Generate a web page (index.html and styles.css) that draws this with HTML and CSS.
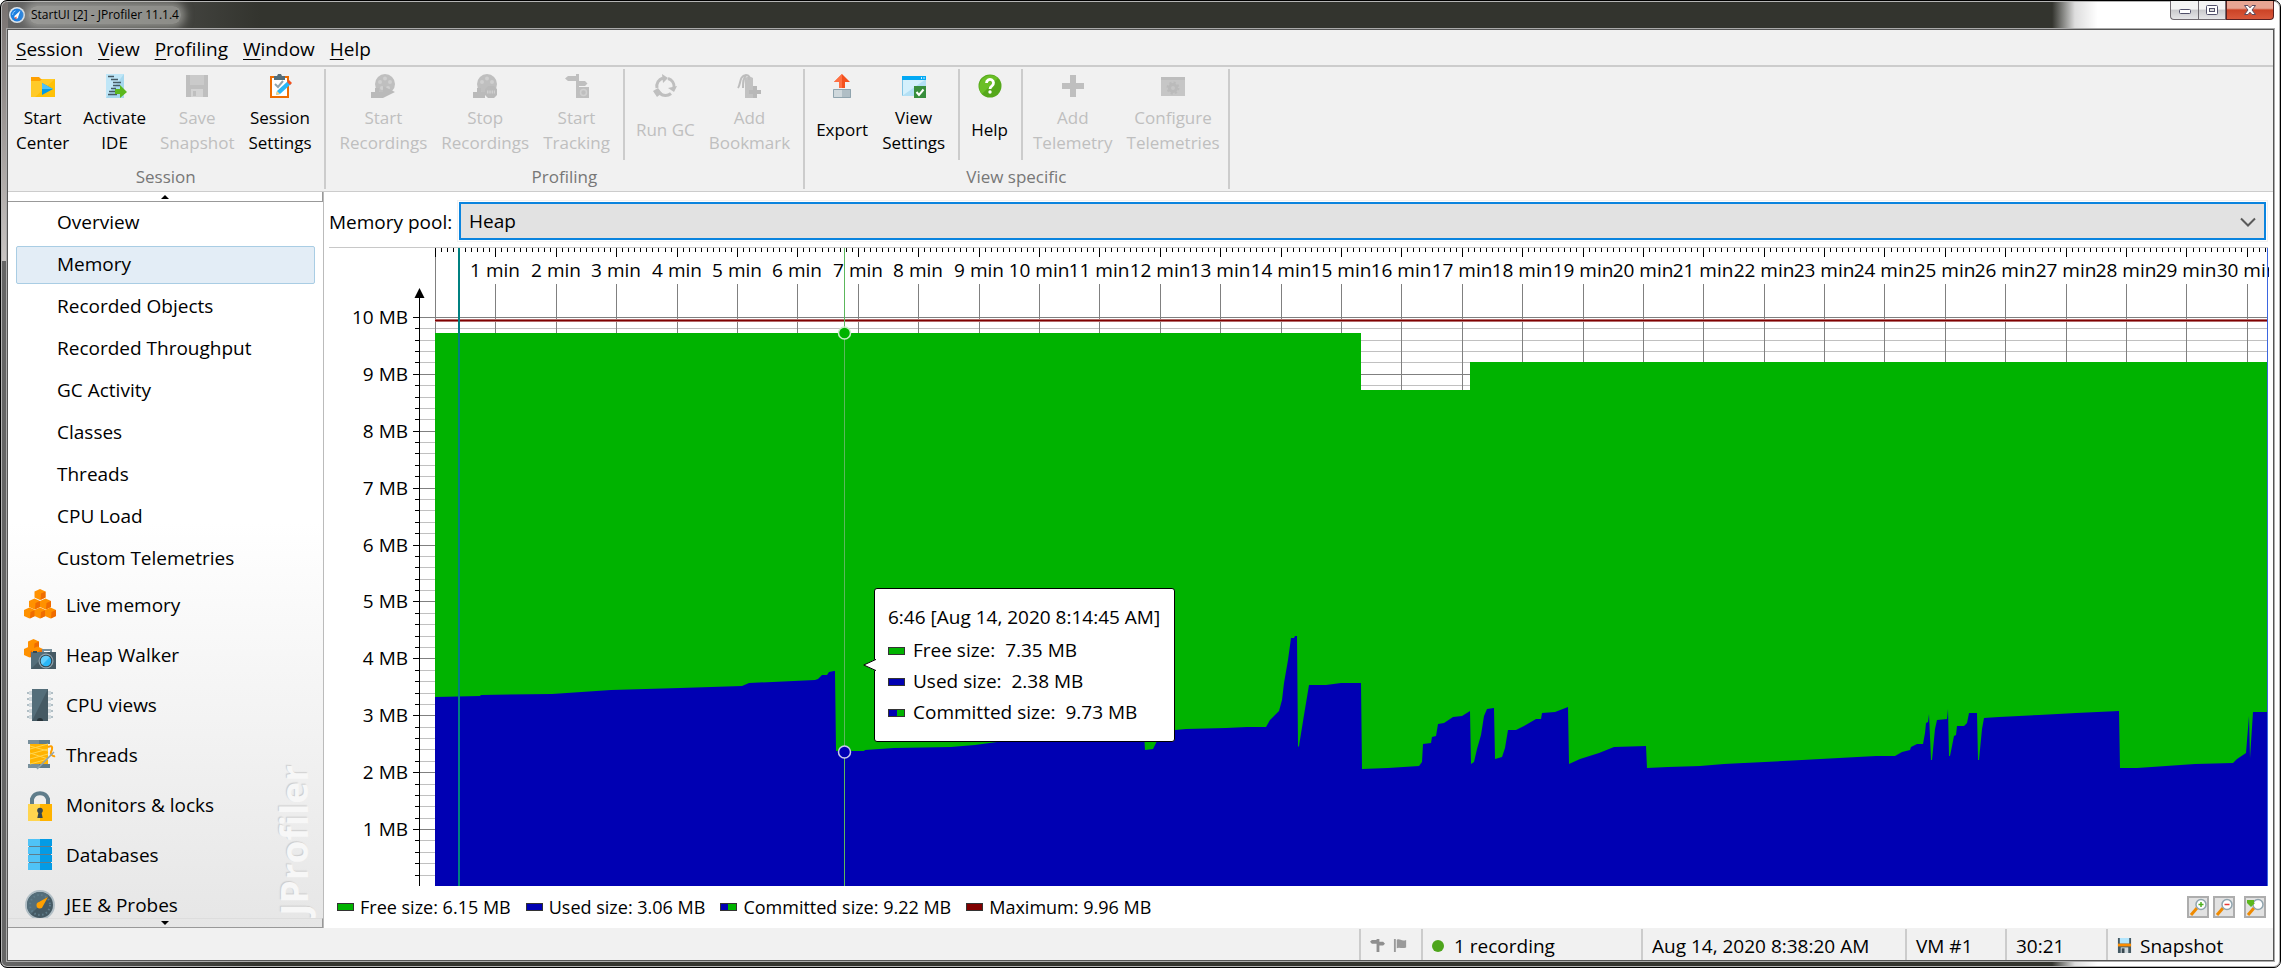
FILE: index.html
```html
<!DOCTYPE html>
<html lang="en">
<head>
<meta charset="utf-8">
<title>StartUI [2] - JProfiler 11.1.4</title>
<link rel="stylesheet" href="styles.css">
</head>
<body>
<div class="frame">
  <header class="titlebar">
    <svg class="app-icon" viewBox="0 0 16 16"><circle cx="8" cy="8" r="8" fill="#dfe6ec"/><circle cx="8" cy="8" r="6.5" fill="#1e7fe0"/><path d="M11.5 3.500 9.300 9.500a2 2 0 1 1-2.700-1.600z" fill="#fff"/><path d="M3.500 8a4.500 4.500 0 0 1 3-4.200" fill="none" stroke="#8cc8ff"/><path d="M5.500 11l2-1.500v3z" fill="#e8452c"/></svg>
    <h1 class="title">StartUI [2] - JProfiler 11.1.4</h1>
    <div class="window-buttons">
      <button class="wb wb-min" aria-label="Minimize"><svg viewBox="0 0 14 12"><rect x="1.500" y="5.500" width="11" height="4" rx="1" fill="#fff" stroke="#51506a"/></svg></button>
      <button class="wb wb-max" aria-label="Maximize"><svg viewBox="0 0 14 12"><rect x="1.500" y="1.500" width="11" height="9" rx="1" fill="#fff" stroke="#51506a"/><rect x="4.500" y="4.500" width="5" height="3" fill="#ddd" stroke="#51506a"/></svg></button>
      <button class="wb wb-close" aria-label="Close"><svg viewBox="0 0 14 12"><path d="M1.500 1.500h3.500l2 2.300 2-2.300h3.500L9 6l3.500 4.500H9L7 8.200l-2 2.300H1.500L5 6z" fill="#fff" stroke="#5c4a5e"/></svg></button>
    </div>
  </header>

  <div class="client">
    <nav class="menubar" aria-label="Main menu">
      <button><u>S</u>ession</button><button><u>V</u>iew</button><button><u>P</u>rofiling</button><button><u>W</u>indow</button><button><u>H</u>elp</button>
    </nav>

    <div class="toolbar">
      <section class="group">
        <div class="tools">
          <div class="cluster lead">
            <button class="tool"><svg viewBox="0 0 24 24"><path d="M0 3h8l2 2h14v18H0z" fill="#ffa000"/><path d="M0 7h9l2-2h13v18H0z" fill="#ffca28"/><path d="M24 5v18H4z" fill="#ffc107"/><path d="M11 9v12l11-6z" fill="#039be5"/><path d="M11 9v6h11z" fill="#4fc3f7"/></svg><span class="label">Start<br>Center</span></button>
            <button class="tool"><svg viewBox="0 0 24 24"><path d="M3 0h18v24H3z" fill="#bfe6f7"/><path d="M3 24 21 0v24z" fill="#a6d8ee"/><path d="M5 2.500h6M8 5.500h7M10 8.500h8M10 11.500h7M8 14.500h5M6 17.500h6M5 20.500h9" stroke="#455a64" stroke-width="1.500"/><path d="M12 15h5v-4l7 7-7 6v-4h-5z" fill="#5cb81e"/></svg><span class="label">Activate<br>IDE</span></button>
            <button class="tool" disabled><svg viewBox="0 0 24 24" fill="#bfbfbf"><path d="M1 1h22v22H1z"/><path d="M5 1h14v10H5z" fill="#cacaca"/><path d="M6 15h12v8H6z" fill="#d3d3d3"/><path d="M8 17h3v5H8z"/></svg><span class="label">Save<br>Snapshot</span></button>
            <button class="tool"><svg viewBox="0 0 24 24"><rect x="3" y="3" width="17" height="20" fill="#fff" stroke="#ef6c00" stroke-width="2"/><path d="M6 2h3l1-2h3l1 2h3v4H6z" fill="#546e7a"/><path d="m7 10 3 3 5-6" fill="none" stroke="#90a4ae" stroke-width="2"/><path d="m20 7 3 3-11 10-4 1 1-4z" fill="#29b6f6"/><path d="m19 8 2-2 3 3-2 2z" fill="#f4511e"/><path d="m9 17 3 3-4 1z" fill="#ffd180"/></svg><span class="label">Session<br>Settings</span></button>
          </div>
        </div>
        <div class="group-name">Session</div>
      </section>

      <section class="group">
        <div class="tools">
          <div class="cluster wide">
            <button class="tool" disabled><svg viewBox="0 0 24 24"><circle cx="14" cy="10" r="10" fill="#bfbfbf"/><g fill="#cfcfcf"><circle cx="14" cy="4.500" r="2"/><circle cx="19" cy="8" r="2"/><circle cx="9" cy="8" r="2"/><circle cx="17" cy="14" r="2"/><circle cx="11" cy="14" r="2"/></g><path d="M0 18h4v-4h4v4h4v6H0zM12 12l12 6-12 6z" fill="#bababa"/></svg><span class="label">Start<br>Recordings</span></button>
            <button class="tool" disabled><svg viewBox="0 0 24 24"><circle cx="14" cy="10" r="10" fill="#bfbfbf"/><g fill="#cfcfcf"><circle cx="14" cy="4.500" r="2"/><circle cx="19" cy="8" r="2"/><circle cx="9" cy="8" r="2"/></g><path d="M0 18h4v-4h4v4h4v6H0zM15 12h6l3 3v6l-3 3h-6l-3-3v-6z" fill="#bababa"/><path d="M14 18h8" stroke="#cfcfcf" stroke-width="3" stroke-dasharray="1.500 .8"/></svg><span class="label">Stop<br>Recordings</span></button>
            <button class="tool" disabled><svg viewBox="0 0 24 24" fill="#bfbfbf"><path d="M0 4.500 3 2h8V0h3v7h6l2.500 2.500L20 12h-6v1h10v11H11V7H3z"/><circle cx="18.500" cy="18.500" r="3" fill="none" stroke="#d0d0d0" stroke-width="1.500"/></svg><span class="label">Start<br>Tracking</span></button>
          </div>
          <div class="cluster">
            <button class="tool" disabled><svg viewBox="0 0 24 24" fill="none" stroke="#bfbfbf" stroke-width="3"><path d="M4 14A8.500 8.500 0 0 1 10 4M15 4.500a8.500 8.500 0 0 1 6 9M18 19.500a8.500 8.500 0 0 1-11 0"/><path d="m9 0 6 4-5 5zM24 12l-3 6-6-4zM0 17l5-3 4 5-5 4z" fill="#bfbfbf" stroke="none"/></svg><span class="label">Run GC</span></button>
            <button class="tool" disabled><svg viewBox="0 0 24 24"><path d="M8 4l4-2 4 2v20H8z" fill="#c2c2c2"/><path d="M1 14C4 10 2 2 9 1c4 0 3 3 3 5M6 14c0-6 0-10 3-12" fill="none" stroke="#bdbdbd" stroke-width="2"/><path d="M16 12h4v4h4v4h-4v4h-4v-4h-4v-4h4z" fill="#b8b8b8"/></svg><span class="label">Add<br>Bookmark</span></button>
          </div>
        </div>
        <div class="group-name">Profiling</div>
      </section>

      <section class="group">
        <div class="tools">
          <div class="cluster">
            <button class="tool"><svg viewBox="0 0 24 24"><path d="M3 15h18v9H3z" fill="#b0bec5"/><path d="M3 15h9v9H3z" fill="#cfd8dc"/><path d="M3.500 15.500h17v8h-17z" fill="none" stroke="#90a4ae"/><path d="M9 14V8H4l8-8 8 8h-5v6z" fill="#f4511e"/><path d="M9 14V8H4l8-8v14z" fill="#ff7043"/></svg><span class="label">Export</span></button>
            <button class="tool"><svg viewBox="0 0 24 24"><path d="M.5 3.500h23v18H.5z" fill="#d4f0fc" stroke="#81c4e4"/><path d="M0 22 24 5v17z" fill="#b3e0f5"/><path d="M0 2h24v4H0z" fill="#03a9f4"/><path d="M19 4h1M21.500 4h1" stroke="#fff" stroke-width="1.500"/><path d="M12 12h12v12H12z" fill="#388e3c"/><path d="m14.500 18 2.500 3 4.500-5.500" fill="none" stroke="#fff" stroke-width="2"/></svg><span class="label">View<br>Settings</span></button>
          </div>
          <div class="cluster">
            <button class="tool"><svg viewBox="0 0 24 24"><circle cx="12" cy="12" r="11.500" fill="#55a81b"/><path d="M3.900 20.100A11.500 11.500 0 0 1 20.100 3.900z" fill="#6abf26"/><path d="M8.500 9a3.500 3.500 0 1 1 5.500 2.800c-1.500 1-2 1.700-2 3.200" fill="none" stroke="#fff" stroke-width="2.800"/><circle cx="12" cy="18" r="1.700" fill="#fff"/></svg><span class="label">Help</span></button>
          </div>
          <div class="cluster tail">
            <button class="tool" disabled><svg viewBox="0 0 24 24"><path d="M9 1h6v8h8v6h-8v8H9v-8H1V9h8z" fill="#bfbfbf"/></svg><span class="label">Add<br>Telemetry</span></button>
            <button class="tool" disabled><svg viewBox="0 0 24 24"><path d="M0 3h24v19H0z" fill="#c6c6c6"/><path d="M0 3h24v3H0z" fill="#bdbdbd"/><circle cx="12" cy="14" r="3.500" fill="none" stroke="#bbb" stroke-width="3"/><circle cx="12" cy="14" r="5.500" fill="none" stroke="#bbb" stroke-width="2" stroke-dasharray="2.200 2.100"/></svg><span class="label">Configure<br>Telemetries</span></button>
          </div>
        </div>
        <div class="group-name">View specific</div>
      </section>
    </div>

    <div class="body">
      <aside class="sidebar">
        <button class="scroll scroll-up" aria-label="Scroll up"><svg viewBox="0 0 8 4"><path d="M4 0l4 4H0z"/></svg></button>
        <nav class="views" aria-label="Views">
          <div class="subs">
            <a class="sub" href="#overview">Overview</a>
            <a class="sub selected" href="#memory">Memory</a>
            <a class="sub" href="#objects">Recorded Objects</a>
            <a class="sub" href="#throughput">Recorded Throughput</a>
            <a class="sub" href="#gc">GC Activity</a>
            <a class="sub" href="#classes">Classes</a>
            <a class="sub" href="#threads">Threads</a>
            <a class="sub" href="#cpu">CPU Load</a>
            <a class="sub" href="#custom">Custom Telemetries</a>
          </div>
          <a class="cat" href="#live"><svg viewBox="0 0 32 32"><defs><g id="cube"><path d="M0 2.500 5.500 0 11 2.500v6L5.500 11 0 8.500z" fill="#ff9100"/><path d="M6.500 4.500 11 2.500v6l-5 2.500z" fill="#ef6c00"/></g></defs><use href="#cube" x="10.500" y="0"/><use href="#cube" x="5" y="9.500"/><use href="#cube" x="16" y="9.500"/><use href="#cube" x="0" y="18.500"/><use href="#cube" x="10.500" y="18.500"/><use href="#cube" x="21" y="18.500"/></svg>Live memory</a>
          <a class="cat" href="#heap"><svg viewBox="0 0 32 32"><use href="#cube" x="4" y="0"/><use href="#cube" x="0" y="7.500"/><use href="#cube" x="8" y="7.500"/><path d="M19 14v-3h8v3" fill="none" stroke="#78909c" stroke-width="2"/><path d="M7 13h25v17H7z" fill="#546e7a"/><path d="M7 30 24 13h8v17z" fill="#455a64"/><path d="M9 12h4v2H9z" fill="#37474f"/><circle cx="22" cy="22" r="7.500" fill="#90a4ae"/><circle cx="22" cy="22" r="6.300" fill="#37474f"/><circle cx="22" cy="22" r="5.200" fill="#29b6f6"/><path d="M18.300 25.700a5.200 5.200 0 0 1 7.400-7.400z" fill="#64cdfb"/></svg>Heap Walker</a>
          <a class="cat" href="#cpuviews"><svg viewBox="0 0 32 32"><path d="M3 4h26M3 10h26M3 16h26M3 22h26M3 28h26" stroke="#b0bec5" stroke-width="2"/><path d="M5 4h22M5 10h22M5 16h22M5 22h22M5 28h22" stroke="#cfd8dc" stroke-width="4"/><path d="M8 0h16v32H8z" fill="#546e7a"/><path d="M24 0v32H8z" fill="#455a64"/><path d="M13 32a3 3 0 0 1 6 0z" fill="#263238"/></svg>CPU views</a>
          <a class="cat" href="#threadviews"><svg viewBox="0 0 32 32"><path d="M4 1h22v4H4zM4 25h22v4H4z" fill="#607d8b"/><path d="M4 1h11v4H4zM4 25h11v4H4z" fill="#78909c"/><path d="M6 5h18v20H6z" fill="#ffb300"/><path d="m6 10 18-5M6 15l18-5M6 20l18-5M6 25l18-5M6 7l18 5M6 14l18 6" stroke="#ffd54f"/><path d="M24 8c6-3 4 3 3 5s2 5 4 4" fill="none" stroke="#ffa000" stroke-width="2"/><path d="M30 13 13 30" stroke="#90a4ae" stroke-width="1.500"/></svg>Threads</a>
          <a class="cat" href="#monitors"><svg viewBox="0 0 32 32"><path d="M8 16V10a8.500 8.500 0 0 1 16 0v6" fill="none" stroke="#607d8b" stroke-width="4"/><path d="M4 15h24v17H4z" fill="#ffb300"/><path d="M4 15h12v17H4z" fill="#ffd54f"/><circle cx="16" cy="21.500" r="2.800" fill="#37474f"/><path d="m14.800 22-1.500 7h5.400l-1.500-7z" fill="#37474f"/></svg>Monitors &amp; locks</a>
          <a class="cat" href="#databases"><svg viewBox="0 0 32 32"><path d="M5 7h22M5 15h22M5 23h22" stroke="#607d8b" stroke-width="3"/><path d="M4 0h24v7H4zM4 8h24v7H4zM4 16h24v7H4zM4 24h24v7H4z" fill="#039be5"/><path d="M4 0h12v7H4zM4 8h12v7H4zM4 16h12v7H4zM4 24h12v7H4z" fill="#4fc3f7"/></svg>Databases</a>
          <a class="cat" href="#probes"><svg viewBox="0 0 32 32"><circle cx="16" cy="16" r="15" fill="#b0bec5"/><circle cx="16" cy="16" r="13" fill="#455a64"/><path d="M6.800 25.200A13 13 0 0 1 25.200 6.800z" fill="#546e7a"/><circle cx="16" cy="16" r="10" fill="none" stroke="#607d8b" stroke-width="2" stroke-dasharray="1.500 2.500"/><path d="m24 8-5 9a3.300 3.300 0 1 1-4-4z" fill="#ffa000"/></svg>JEE &amp; Probes</a>
          <div class="watermark" aria-hidden="true">JProfiler</div>
        </nav>
        <button class="scroll scroll-down" aria-label="Scroll down"><svg viewBox="0 0 8 4"><path d="M0 0h8L4 4z"/></svg></button>
      </aside>

      <main class="main">
        <div class="pool">
          <label for="pool">Memory pool:</label>
          <div class="select-wrap">
            <select id="pool"><option>Heap</option><option>Non-heap</option></select>
            <svg viewBox="0 0 16 10"><path d="M1 1.500 8 8.500 15 1.500" fill="none" stroke="#5a5a5a" stroke-width="2"/></svg>
          </div>
        </div>
        <div class="chart">
          <svg id="plot" role="img" aria-label="Heap size over time"></svg>
          <div class="tooltip" id="tooltip">
            <svg class="tip" viewBox="0 0 13 12"><path d="M13 0 .8 6 13 12z" fill="#fff"/><path d="M13 .4.800 6 13 11.600" fill="none" stroke="#000"/></svg>
            <div class="tip-title">6:46 [Aug 14, 2020 8:14:45 AM]</div>
            <div class="tip-row"><i class="swatch free"></i>Free size:&nbsp; 7.35 MB</div>
            <div class="tip-row"><i class="swatch used"></i>Used size:&nbsp; 2.38 MB</div>
            <div class="tip-row"><i class="swatch both"></i>Committed size:&nbsp; 9.73 MB</div>
          </div>
        </div>
        <div class="legend">
          <span class="entry"><i class="swatch free"></i>Free size: 6.15 MB</span>
          <span class="entry"><i class="swatch used"></i>Used size: 3.06 MB</span>
          <span class="entry"><i class="swatch both"></i>Committed size: 9.22 MB</span>
          <span class="entry"><i class="swatch max"></i>Maximum: 9.96 MB</span>
          <div class="zoom-buttons">
            <button aria-label="Zoom in"><svg viewBox="0 0 18 18"><path d="m8 10-6 7" stroke="#ef8a00" stroke-width="3"/><circle cx="12" cy="6.500" r="5" fill="#fff" stroke="#90a4ae" stroke-width="1.500"/><path d="M9.500 6.500h5M12 4v5" stroke="#4caf20" stroke-width="1.500"/></svg></button>
            <button aria-label="Zoom out"><svg viewBox="0 0 18 18"><path d="m8 10-6 7" stroke="#ef8a00" stroke-width="3"/><circle cx="12" cy="6.500" r="5" fill="#fff" stroke="#90a4ae" stroke-width="1.500"/><path d="M9.500 6.500h5" stroke="#e53935" stroke-width="1.500"/></svg></button>
            <button class="fit" aria-label="Fit window"><svg viewBox="0 0 18 18"><path d="m8 10-6 7" stroke="#ef8a00" stroke-width="3"/><circle cx="12" cy="6.500" r="5" fill="#fff" stroke="#90a4ae" stroke-width="1.500"/><path d="M1 2h7v3h1l-4 4-4-4z" fill="#5cb81e"/></svg></button>
          </div>
        </div>
      </main>
    </div>

    <footer class="status">
      <div class="cell icons"><svg viewBox="0 0 16 16"><path d="M0 4l2-2h5V1h3v3h4l2 2-2 2h-4v7H7V6H2z" fill="#8f8f8f"/></svg><svg viewBox="0 0 16 16"><path d="M1 1h2v14H1zM4 2c3-2 5 2 10 0v8c-5 2-7-1-10 1z" fill="#9a9a9a"/></svg></div>
      <div class="cell rec"><i class="dot"></i>1 recording</div>
      <div class="cell date">Aug 14, 2020 8:38:20 AM</div>
      <div class="cell vm">VM #1</div>
      <div class="cell time">30:21</div>
      <div class="cell snap"><svg viewBox="0 0 16 16"><path d="M1 0h14v16H1z" fill="#455a64"/><path d="M3 0h10v6H3z" fill="#b3e5fc"/><path d="M1 6h14v3H1z" fill="#fb8c00"/><path d="M4 10h8v6H4z" fill="#cfd8dc"/><path d="M5 11h3v5H5z" fill="#37474f"/></svg>Snapshot</div>
    </footer>
  </div>
</div>
<script src="chart.js"></script>
</body>
</html>
```

FILE: styles.css
```css
* { box-sizing: border-box; }

body {
  margin: 0;
  background: #fff;
  color: #000;
  font: 19px/24px "Open Sans", "Noto Sans", sans-serif;
}

button { font: inherit; color: inherit; background: none; border: 0; padding: 0; }
svg { display: block; }

/* window frame */
.frame {
  display: flex;
  flex-direction: column;
  height: 100vh;
  padding: 0 6px 6px;
  border: 1px solid #000;
  border-radius: 7px;
  background:
    linear-gradient(#77716f, #c8c4c2) left top / 7px 260px no-repeat,
    linear-gradient(90deg, #666 0, #33342e 260px, #33342e 90%, #ddd 91%, #fff 92%);
  box-shadow: inset 0 0 0 1px #b5b5b5;
}

.titlebar { flex: 0 0 28px; display: flex; align-items: center; gap: 4px; padding-left: 2px; }
.app-icon { width: 16px; height: 16px; }
.title {
  margin: 0;
  padding: 0 2px;
  font-size: 12px;
  line-height: 18px;
  font-weight: 400;
  background: rgba(190, 190, 185, .6);
  border-radius: 8px;
  box-shadow: 0 0 8px 4px rgba(190, 190, 185, .6);
}
.window-buttons { margin-left: auto; align-self: flex-start; display: flex; }
.wb { display: grid; place-items: center; width: 28px; height: 19px; border: 1px solid #6f6a70; border-top: 0; background: linear-gradient(#f4f4f4 45%, #c9c9cc 50%, #e6e6e8); }
.wb svg { width: 14px; height: 12px; }
.wb-min { border-radius: 0 0 0 4px; border-right: 0; }
.wb-close { width: 48px; border-color: #5b2020; border-radius: 0 0 4px 0; background: linear-gradient(#e8a593 40%, #cc4326 50%, #d9593c); }

.client { flex: 1; min-height: 0; display: flex; flex-direction: column; border: 1px solid #555; background: #f1f1f1; box-shadow: 0 0 0 1px #aaa; }

/* menu */
.menubar { flex: 0 0 37px; display: flex; align-items: center; gap: 15px; padding: 2px 8px 0; border-bottom: 2px solid #ccc; }
.menubar u { text-underline-offset: 3px; }

/* toolbar */
.toolbar { flex: 0 0 124px; display: flex; padding: 2px 0; border-bottom: 1px solid #ccc; font-size: 17px; line-height: 25px; }
.group { display: flex; flex-direction: column; border-right: 2px solid #ccc; }
.tools { display: flex; }
.cluster { display: flex; height: 91px; padding: 5px 6px 0 4px; }
.cluster.lead { padding-left: 1px; padding-right: 5px; }
.cluster.wide { padding-left: 7px; }
.cluster.tail { padding-left: 3px; padding-right: 1px; }
.cluster + .cluster { border-left: 2px solid #ccc; }
.tool { display: flex; flex-direction: column; align-items: center; padding: 0 7px; }
.tool svg { width: 24px; height: 24px; }
.tool .label { flex: 1; display: flex; align-items: center; text-align: center; margin: 6px 0 5px; white-space: nowrap; }
.tool:disabled { color: #bfbfbf; }
.group-name { text-align: center; color: #777; padding-top: 4px; }

/* body */
.body { flex: 1; min-height: 0; display: flex; background: #fff; }
.sidebar { flex: 0 0 316px; display: flex; flex-direction: column; border-right: 1px solid #bbb; background: linear-gradient(#fff 45%, #e6e6e6); }
.scroll { flex: 0 0 10px; display: grid; place-items: center; border-right: 1px solid #999; border-bottom: 1px solid #999; }
.scroll svg { width: 8px; height: 4px; }
.scroll-down { border-top: 1px solid #ddd; }
.views { position: relative; flex: 1; min-height: 0; overflow: hidden; }
.views a { display: flex; align-items: center; color: #000; text-decoration: none; }
.subs { display: grid; gap: 4px; padding: 2px 8px; }
.sub { height: 38px; padding: 0 0 2px 40px; border: 1px solid transparent; border-radius: 2px; }
.sub.selected { background: #e3edf6; border-color: #a9cde4; }
.cat { height: 50px; gap: 10px; padding-left: 16px; }
.cat svg { flex: none; width: 32px; height: 32px; }
.watermark { position: absolute; right: 8px; bottom: 2px; writing-mode: vertical-rl; transform: rotate(180deg); font-size: 37px; line-height: 42px; font-weight: 700; color: #f7f7f7; text-shadow: 1px -1px 1px #ccc; }

.main { flex: 1; min-width: 0; display: flex; flex-direction: column; padding: 8px 4px 0 5px; }
.pool { flex: 0 0 48px; display: flex; align-items: flex-start; gap: 4px; margin-right: 1px; border-bottom: 1px solid #c8c8c8; }
.pool label { flex: 0 0 124px; white-space: nowrap; padding-top: 10px; }
.select-wrap { position: relative; flex: 1; padding: 1px; border: 1px solid #f1f1f1; }
.select-wrap select { display: block; width: 100%; height: 38px; padding: 0 8px; appearance: none; font: inherit; color: inherit; background: #e2e2e2; border: 2px solid #0b84de; border-radius: 0; }
.select-wrap svg { position: absolute; right: 11px; top: 16px; width: 16px; height: 10px; pointer-events: none; }

.chart { position: relative; flex: 1; min-height: 0; }
#plot { position: absolute; inset: 0; width: 100%; height: 100%; }
.axis-label { text-anchor: end; }
.time-label { text-anchor: middle; }

.tooltip { position: absolute; left: 0; top: 0; padding: 13px 14px 13px 13px; min-width: 301px; background: #fff; border: 1px solid #000; border-radius: 3px; white-space: nowrap; }
.tip { position: absolute; left: -12px; top: 70px; width: 13px; height: 12px; }
.tip-title { line-height: 30px; padding-bottom: 3px; }
.tip-row { display: flex; align-items: center; gap: 8px; line-height: 31px; }

.swatch { display: inline-block; flex: none; width: 17px; height: 8px; border: 1px solid #333; }
.free { background: #00b300; }
.used { background: #0000b3; }
.both { background: linear-gradient(90deg, #0000b3 50%, #00b300 50%); }
.max { background: #800000; }

.legend { flex: 0 0 42px; display: flex; align-items: center; gap: 15px; padding: 0 3px 0 8px; font-size: 18px; }
.entry { display: flex; align-items: center; gap: 6px; white-space: nowrap; }
.zoom-buttons { margin-left: auto; display: flex; gap: 4px; }
.zoom-buttons button { width: 22px; height: 22px; background: #e2e2e2; border: 2px solid #adadad; }
.zoom-buttons svg { width: 18px; height: 18px; }
.zoom-buttons .fit { margin-left: 5px; }

/* status bar */
.status { flex: 0 0 32px; display: flex; justify-content: flex-end; padding-top: 1px; }
.cell { display: flex; align-items: center; padding: 2px 9px 0; border-left: 2px solid #ccc; white-space: nowrap; }
.cell svg { width: 15px; height: 15px; }
.icons { gap: 8px; width: 62px; }
.rec { gap: 10px; width: 220px; }
.dot { width: 12px; height: 12px; border-radius: 50%; background: #4ea51c; }
.date { width: 264px; }
.vm { width: 100px; }
.time { width: 101px; }
.snap { gap: 8px; width: 167px; }
```

FILE: chart.js
```javascript
// Heap telemetry plot. Samples use a 1833 x 639 grid whose y axis points down from the top of the chart.
const GRID = { left: 435, top: 247, width: 1833, height: 639 };
const MINUTES = 30.35;
const MB = 57;
const AXIS = 106;

const committed = [[435, 332], [1361, 332], [1361, 389], [1470, 389], [1470, 361], [2268, 361]];

const used = `435,697 480,696 481,695 552,694 611,690 680,688 742,686 749,683 815,680 818,679 822,675 827,675 829,672
834,671 835,671 836,751 864,751 865,750 894,748 951,747 975,745 997,742 1060,738 1144,734 1145,750 1153,749 1157,741
1162,731 1175,730 1186,729 1226,728 1247,727 1266,727 1270,720 1275,715 1279,711 1282,700 1284,683 1288,660 1291,638
1294,638 1295,636 1297,636 1298,747 1299,746 1304,715 1309,685 1326,685 1341,683 1361,683 1362,769 1388,768 1419,766
1422,762 1423,744 1431,743 1432,737 1436,736 1438,724 1444,723 1453,717 1462,716 1470,711 1471,764 1474,762 1477,749
1481,735 1484,716 1487,709 1494,708 1495,759 1502,757 1505,748 1508,730 1516,730 1524,726 1536,719 1541,719 1542,713
1555,712 1568,707 1569,764 1580,759 1599,753 1614,747 1646,746 1647,768 1668,767 1700,766 1724,764 1802,760 1876,756
1895,756 1902,752 1910,750 1911,747 1917,744 1923,744 1925,733 1926,723 1928,722 1929,714 1931,760 1932,760 1935,729
1937,720 1947,719 1948,709 1949,756 1950,756 1952,746 1954,736 1956,735 1957,726 1964,726 1967,723 1969,713 1977,713
1978,760 1979,760 1982,729 1984,718 1999,717 2039,715 2076,713 2119,711 2120,768 2137,768 2195,764 2233,763 2237,759
2246,753 2249,716 2250,758 2253,712 2268,712`.split(/\s+/).map(p => p.split(',').map(Number));

const svg = document.getElementById('plot');
const tooltip = document.getElementById('tooltip');

function draw() {
  const w = svg.clientWidth - 1;
  const h = svg.clientHeight;
  const plotW = w - AXIS;
  const mb = h / (GRID.height / MB);
  const sx = x => Math.round(AXIS + (x - GRID.left) / GRID.width * plotW);
  const sy = y => Math.round((y - GRID.top) / GRID.height * h);
  const minute = m => Math.round(AXIS + m / MINUTES * plotW);
  const out = [];
  const rect = (x, y, rw, rh, fill) => out.push(`<rect x="${x}" y="${y}" width="${rw}" height="${rh}" fill="${fill}"/>`);
  const area = (pts, fill) => out.push(`<polygon points="${AXIS},${h} ${pts.map(p => sx(p[0]) + ',' + sy(p[1])).join(' ')} ${w},${h}" fill="${fill}"/>`);
  const axisX = AXIS - 16;

  // value axis
  for (let i = 1; i <= 50; i++) {
    const y = Math.round(h - i * mb / 5);
    const major = i % 5 === 0;
    rect(axisX, y, w - axisX, 1, major ? '#808080' : '#c0c0c0');
    rect(axisX - (major ? 6 : 4), y, major ? 6 : 4, 1, '#000');
    if (major) out.push(`<text class="axis-label" x="${axisX - 11}" y="${y + 7}">${i / 5} MB</text>`);
  }
  rect(axisX, 46, 1, h - 46, '#000');
  out.push(`<path d="M${axisX + .5} 40l5 10h-10z"/>`);

  // time axis
  rect(AXIS, 0, 1, h, '#808080');
  for (let i = 0; i <= 303; i++) {
    const x = minute(i / 10);
    const major = i % 10 === 0;
    rect(x, 0, 1, major ? 9 : 4, '#000');
    if (major && i) {
      rect(x, 36, 1, h - 36, '#808080');
      out.push(`<text class="time-label" x="${x}" y="29">${i / 10} min</text>`);
    }
  }

  // series
  area(committed, '#00b300');
  area(used, '#0000b3');
  const maxY = Math.ceil(h - 9.96 * mb);
  rect(AXIS, maxY - 1, plotW, 3, '#b36b6b');
  rect(AXIS, maxY, plotW, 1, '#800000');

  // bookmark, cursor and end of recording
  rect(sx(458), 0, 2, h, '#008080');
  const cx = sx(844);
  rect(cx, 0, 1, h, '#5cb85c');
  out.push(`<circle cx="${cx + .5}" cy="${sy(332.500)}" r="6" fill="#00b300" stroke="#c9eec9" stroke-width="1.500"/>`);
  out.push(`<circle cx="${cx + .5}" cy="${sy(751.500)}" r="6" fill="#0000b3" stroke="#c9c9ee" stroke-width="1.500"/>`);
  rect(w - 1, 0, 1, h, '#3b66e0');

  svg.innerHTML = out.join('');
  tooltip.style.left = (cx + 30) + 'px';
  tooltip.style.top = sy(588) + 'px';
}

new ResizeObserver(draw).observe(svg);
draw();
```
